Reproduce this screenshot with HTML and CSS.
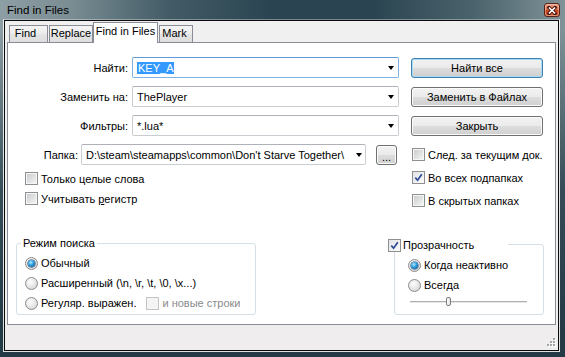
FILE: index.html
```html
<!DOCTYPE html>
<html lang="ru">
<head>
    <meta charset="UTF-8">
    <title>Find in Files</title>
    <link rel="stylesheet" href="styles.css">
</head>
<body>
<div class="window">
    <div class="titlebar">
        <span class="title">Find in Files</span>
        <span class="close">
            <svg width="10" height="9" viewBox="0 0 10 9"><path d="M2 1.5 L8 7.5 M8 1.5 L2 7.5" stroke="#4a1408" stroke-width="3.4" stroke-linecap="square"/><path d="M2 1.5 L8 7.5 M8 1.5 L2 7.5" stroke="#fff" stroke-width="1.7"/></svg>
        </span>
    </div>
    <div class="frame">
        <div class="client">
            <div class="tabs">
                <div class="tab tab-find">Find</div>
                <div class="tab tab-replace">Replace</div>
                <div class="tab tab-active">Find in Files</div>
                <div class="tab tab-mark">Mark</div>
            </div>

            <div class="panel">
                <div class="top">
                    <div class="form">
                        <div class="row">
                            <label class="lbl">Найти:</label>
                            <div class="combo combo-focus"><span class="value"><span class="sel">KEY_A</span></span><span class="arrow"></span></div>
                        </div>
                        <div class="row">
                            <label class="lbl">Заменить на:</label>
                            <div class="combo"><span class="value">ThePlayer</span><span class="arrow"></span></div>
                        </div>
                        <div class="row">
                            <label class="lbl">Фильтры:</label>
                            <div class="combo"><span class="value">*.lua*</span><span class="arrow"></span></div>
                        </div>
                        <div class="row row-folder">
                            <label class="lbl lbl-short">Папка:</label>
                            <div class="combo combo-folder"><span class="value">D:\steam\steamapps\common\Don't Starve Together\</span><span class="arrow"></span></div>
                            <button class="btn btn-dots">...</button>
                        </div>
                        <div class="checks checks-left">
                            <div class="check"><span class="cb"></span><span>Только целые слова</span></div>
                            <div class="check"><span class="cb"></span><span>Учитывать <u>р</u>егистр</span></div>
                        </div>
                    </div>

                    <div class="actions">
                        <div class="buttons">
                            <button class="btn btn-default">Найти все</button>
                            <button class="btn">Заменить в Файлах</button>
                            <button class="btn">Закрыть</button>
                        </div>
                        <div class="checks checks-right">
                            <div class="check"><span class="cb"></span><span>След. за текущим док.</span></div>
                            <div class="check"><span class="cb cb-on"><svg width="9" height="9" viewBox="0 0 9 9"><path d="M1.3 4.6 L3.6 7.2 L7.8 1.2" fill="none" stroke="#2c4796" stroke-width="1.7"/></svg></span><span>Во всех подпапках</span></div>
                            <div class="check"><span class="cb"></span><span>В скрытых папках</span></div>
                        </div>
                    </div>
                </div>

                <div class="groups">
                    <fieldset class="group group-mode">
                        <legend>Режим поиска</legend>
                        <div class="opts">
                            <div class="opt"><span class="radio radio-on"></span><span>Обычный</span></div>
                            <div class="opt"><span class="radio"></span><span>Расширенный (\n, \r, \t, \0, \x...)</span></div>
                            <div class="opt"><span class="radio"></span><span>Регуляр. выражен.</span><span class="cb cb-off"></span><span class="muted">и новые строки</span></div>
                        </div>
                    </fieldset>
                    <fieldset class="group group-trans">
                        <legend><span class="cb cb-on"><svg width="9" height="9" viewBox="0 0 9 9"><path d="M1.3 4.6 L3.6 7.2 L7.8 1.2" fill="none" stroke="#2c4796" stroke-width="1.7"/></svg></span><span>Прозрачность</span></legend>
                        <div class="opts">
                            <div class="opt"><span class="radio radio-on"></span><span>Когда неактивно</span></div>
                            <div class="opt"><span class="radio"></span><span>Всегда</span></div>
                            <div class="slider"><span class="track"></span><span class="thumb"></span></div>
                        </div>
                    </fieldset>
                </div>
            </div>

            <div class="status">
                <svg class="grip" width="10" height="10" viewBox="0 0 10 10">
                    <rect x="7" y="1" width="2" height="2" fill="#fff"/><rect x="6" y="0" width="2" height="2" fill="#a6a6a6"/>
                    <rect x="4" y="4" width="2" height="2" fill="#fff"/><rect x="3" y="3" width="2" height="2" fill="#a6a6a6"/>
                    <rect x="7" y="4" width="2" height="2" fill="#fff"/><rect x="6" y="3" width="2" height="2" fill="#a6a6a6"/>
                    <rect x="1" y="7" width="2" height="2" fill="#fff"/><rect x="0" y="6" width="2" height="2" fill="#a6a6a6"/>
                    <rect x="4" y="7" width="2" height="2" fill="#fff"/><rect x="3" y="6" width="2" height="2" fill="#a6a6a6"/>
                    <rect x="7" y="7" width="2" height="2" fill="#fff"/><rect x="6" y="6" width="2" height="2" fill="#a6a6a6"/>
                </svg>
            </div>
        </div>
    </div>
</div>
</body>
</html>
```

FILE: styles.css
```css
* {
    margin: 0;
    padding: 0;
    box-sizing: border-box;
}

body {
    width: 565px;
    height: 357px;
    overflow: hidden;
    background: #223b46;
    font-family: "Liberation Sans", Arial, sans-serif;
    font-size: 11px;
    color: #000;
}

/* window frame: grey-teal glass, darker towards the bottom */
.window {
    width: 565px;
    height: 357px;
    display: flex;
    flex-direction: column;
    padding: 0 5px 5px 3px;
    background:
        linear-gradient(to bottom, rgba(34, 59, 70, 0) 0, rgba(34, 59, 70, 0) 30px, rgba(34, 59, 70, 0.8) 190px, #223b46 330px),
        linear-gradient(to right, #8d9ea4 0%, #7b8e94 12%, #425b66 30%, #2a4451 48%, #2a4451 66%, #4b636c 84%, #809399 100%);
}

.titlebar {
    height: 19px;
    display: flex;
    justify-content: space-between;
    padding-left: 4px;
}

.title {
    padding-top: 4px;
    font-size: 11.5px;
    color: #000;
}

.close {
    width: 16px;
    height: 14px;
    margin-top: 3px;
    display: flex;
    align-items: center;
    justify-content: center;
    border: 1px solid #5a2114;
    border-radius: 3px;
    background: linear-gradient(#eba48c, #dc7353 45%, #c8421e 55%, #d8663c);
    box-shadow: inset 0 0 0 1px rgba(255, 255, 255, 0.3);
}

.frame {
    flex: 1;
    border: 1px solid rgba(255, 255, 255, 0.85);
    border-top-color: rgba(255, 255, 255, 0.35);
}

.client {
    height: 100%;
    display: flex;
    flex-direction: column;
    border: 1px solid #0b0b0b;
    background: #f0f0f0;
}

/* tabs */
.tabs {
    height: 21px;
    display: flex;
    align-items: flex-end;
    padding-left: 4px;
}

.tab {
    height: 17px;
    line-height: 15px;
    text-align: center;
    border: 1px solid #898c95;
    border-bottom: none;
    background: linear-gradient(#f4f4f4, #ececec 50%, #e4e4e4 51%, #dedede);
    white-space: nowrap;
}

.tab-find { width: 39px; padding-right: 6px; }
.tab-replace { width: 44px; margin-left: 1px; }
.tab-mark { width: 34px; margin-left: 1px; padding-right: 3px; }

.tab-active {
    position: relative;
    z-index: 1;
    width: 65px;
    height: 21px;
    margin-bottom: -1px;
    line-height: 16px;
    background: #fff;
}

.panel {
    height: 283px;
    margin: 0 2px;
    border: 1px solid #898c95;
    background: #fff;
}

.status {
    flex: 1;
    display: flex;
    justify-content: flex-end;
    align-items: flex-end;
    padding: 0 1px 2px 0;
    background: #efeded;
}

/* upper part: fields on the left, buttons on the right */
.top {
    display: flex;
    align-items: flex-start;
    padding-top: 14px;
}

.form {
    width: 403px;
}

.row {
    display: flex;
    align-items: center;
    height: 21px;
    margin-bottom: 8px;
}

.row-folder {
    margin-bottom: 7px;
}

.lbl {
    width: 120px;
    margin-right: 4px;
    text-align: right;
    white-space: nowrap;
}

.lbl-short {
    width: 70px;
    margin-right: 3px;
}

.combo {
    width: 267px;
    height: 21px;
    display: flex;
    align-items: center;
    border: 1px solid #c9ccd1;
    border-top-color: #aeb1b7;
    border-radius: 2px;
    background: #fff;
}

.combo-focus {
    border-color: #7fb2e3;
    border-top-color: #5e9bd6;
}

.combo-folder {
    width: 285px;
}

.value {
    flex: 1;
    padding-left: 4px;
    overflow: hidden;
    white-space: nowrap;
}

.combo-folder .value {
    padding-right: 4px;
}

.sel {
    background: #3399ff;
    color: #fff;
    padding: 1px 1px 2px;
}

.arrow {
    width: 0;
    height: 0;
    margin: 1px 4px 0 0;
    border-left: 3.5px solid transparent;
    border-right: 3.5px solid transparent;
    border-top: 4px solid #000;
}

.combo-folder .arrow {
    margin-right: 3px;
}

/* buttons */
.btn {
    height: 20px;
    font-family: inherit;
    font-size: 11px;
    color: #000;
    border: 1px solid #707070;
    border-radius: 3px;
    background: linear-gradient(#f2f2f2, #ebebeb 48%, #dddddd 52%, #cfcfcf);
    box-shadow: inset 0 0 0 1px #fbfbfb;
}

.btn-default {
    border-color: #3c7fb1;
    box-shadow: inset 0 0 0 1px #a6dcf6;
}

.btn-dots {
    width: 21px;
    margin-left: 10px;
    padding-top: 4px;
    line-height: 12px;
}

.actions {
    width: 132px;
    padding-top: 1px;
}

.buttons {
    display: flex;
    flex-direction: column;
    gap: 9px;
}

.buttons .btn {
    width: 132px;
}

/* check boxes */
.checks {
    display: flex;
    flex-direction: column;
}

.checks-left {
    padding-left: 17px;
    gap: 7px;
}

.checks-right {
    margin-top: 12px;
    padding-left: 1px;
    gap: 10px;
}

.check {
    display: flex;
    align-items: center;
    height: 13px;
    gap: 3px;
    white-space: nowrap;
}

.cb {
    width: 13px;
    height: 13px;
    flex: none;
    display: flex;
    align-items: center;
    justify-content: center;
    padding: 1px;
    border: 1px solid #8e8f8f;
    background: linear-gradient(135deg, #cbcdd0, #f3f3f3) content-box, #f6f6f6;
}

.cb-on {
    padding: 0;
    background: linear-gradient(135deg, #e3e4e6, #fafafa);
}

.cb-off {
    margin-left: 7px;
    border-color: #c4c4c4;
    background: #f4f4f4;
}

.muted {
    color: #8a8a8a;
}

/* group boxes */
.groups {
    display: flex;
    margin-top: 29px;
    padding-left: 8px;
}

.group {
    min-width: 0;
    border: 1px solid #d5dfe5;
    border-radius: 3px;
}

.group legend {
    line-height: 14px;
}

.group-mode {
    width: 240px;
    padding: 0 0 0 8px;
}

.group-mode legend {
    margin-left: -4px;
    padding: 0 2px;
}

.group-trans {
    width: 150px;
    margin-left: 138px;
    padding: 0 0 0 13px;
}

.group-trans legend {
    width: 120px;
    margin-left: -20px;
    display: flex;
    align-items: center;
    gap: 2px;
    padding-top: 2px;
}

.opts {
    display: flex;
    flex-direction: column;
    gap: 2px;
    padding-top: 4px;
}

.opt {
    height: 18px;
    display: flex;
    align-items: center;
    gap: 3px;
    white-space: nowrap;
}

.radio {
    width: 13px;
    height: 13px;
    flex: none;
    display: flex;
    align-items: center;
    justify-content: center;
    border: 1px solid #8c8c8c;
    border-radius: 50%;
    background: radial-gradient(circle at 40% 35%, #ffffff 0, #e9e9e9 45%, #cdcdcd 100%);
}

.radio-on::after {
    content: '';
    width: 7px;
    height: 7px;
    border-radius: 50%;
    background: radial-gradient(circle at 40% 35%, #b4e8fc 0, #2b9ade 45%, #0b4a82 100%);
    box-shadow: 0 0 0 0.5px #123f66;
}

/* trackbar */
.slider {
    position: relative;
    height: 18px;
    padding: 5px 0 0 2px;
}

.track {
    display: block;
    width: 117px;
    height: 2px;
    border-top: 1px solid #b0b0b0;
    border-bottom: 1px solid #e6e6e6;
}

.thumb {
    position: absolute;
    top: 1px;
    left: 38px;
    width: 5px;
    height: 9px;
    border: 1px solid #7b7b7b;
    border-radius: 2px;
    background: linear-gradient(to right, #ffffff, #e2e2e2);
}
```
